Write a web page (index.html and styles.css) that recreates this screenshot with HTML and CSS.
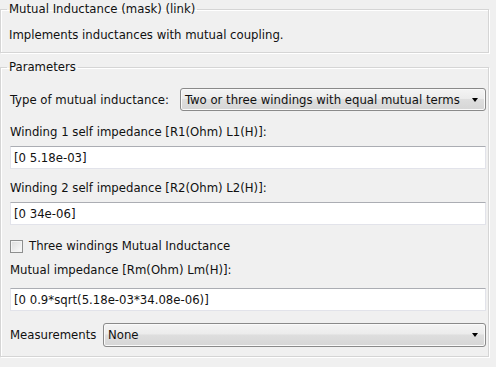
FILE: index.html
```html
<!DOCTYPE html>
<html>
<head>
<meta charset="utf-8">
<link rel="stylesheet" href="styles.css">
</head>
<body>
<fieldset class="group group-desc">
  <legend class="legend">Mutual Inductance (mask) (link)</legend>
  <div class="desc">Implements inductances with mutual coupling.</div>
</fieldset>
<fieldset class="group group-params">
  <legend class="legend">Parameters</legend>
  <div class="row row-type">
    <span class="label">Type of mutual inductance:</span>
    <div class="combo combo-type"><span class="combo-text">Two or three windings with equal mutual terms</span><span class="arrow"></span></div>
  </div>
  <div class="label field-label l1">Winding 1 self impedance [R1(Ohm) L1(H)]:</div>
  <div class="edit e1">[0 5.18e-03]</div>
  <div class="label field-label l2">Winding 2 self impedance [R2(Ohm) L2(H)]:</div>
  <div class="edit e2">[0 34e-06]</div>
  <div class="check-row">
    <span class="checkbox"></span>
    <span class="label">Three windings Mutual Inductance</span>
  </div>
  <div class="label field-label l3">Mutual impedance [Rm(Ohm) Lm(H)]:</div>
  <div class="edit e3">[0 0.9*sqrt(5.18e-03*34.08e-06)]</div>
  <div class="row row-meas">
    <span class="label">Measurements</span>
    <div class="combo combo-meas"><span class="combo-text">None</span><span class="arrow"></span></div>
  </div>
</fieldset>
</body>
</html>
```
FILE: styles.css
```css
html, body {
  margin: 0;
  padding: 0;
  background: #f0f0f0;
}
body {
  width: 496px;
  height: 367px;
  overflow: hidden;
  font-family: "DejaVu Sans Condensed", "DejaVu Sans", sans-serif;
  font-size: 13px;
  line-height: 14px;
  color: #111;
}
.group {
  box-sizing: border-box;
  width: 489px;
  margin: 0;
  padding: 0 1px 0 9px;
  border: 1px solid #d5d5d5;
  box-shadow: inset 1px 1px 0 #fff, 1px 1px 0 #fff;
  min-width: 0;
}
.legend {
  padding: 0 2px;
  margin-left: -3px;
  line-height: 14px;
}
.group-desc {
  margin-top: 2px;
  height: 51px;
}
.desc {
  margin-top: 12px;
  margin-left: -1px;
}
.group-params {
  margin-top: 7px;
  height: 297px;
  display: flex;
  flex-direction: column;
}
.row {
  display: flex;
  align-items: center;
}
.row-type {
  margin-top: 14px;
  height: 23px;
}
.row-type .label {
  width: 170px;
  flex: none;
}
.row-meas {
  margin-top: 12px;
  height: 24px;
}
.row-meas .label {
  width: 93px;
  flex: none;
}
.combo {
  flex: 1;
  box-sizing: border-box;
  height: 100%;
  margin-right: 1px;
  border: 1px solid #8a8a8a;
  border-radius: 3px;
  background: linear-gradient(#f4f4f4 0%, #ececec 45%, #dedede 50%, #d6d6d6 100%);
  box-shadow: inset 0 0 0 1px #fafafa;
  display: flex;
  align-items: center;
  padding-left: 4px;
}
.combo-text {
  flex: 1;
}
.arrow {
  width: 0;
  height: 0;
  margin-right: 7px;
  border-left: 3px solid transparent;
  border-right: 3px solid transparent;
  border-top: 4px solid #000;
}
.field-label.l1 { margin-top: 14px; }
.field-label.l2 { margin-top: 12px; }
.field-label.l3 { margin-top: 10px; }
.edit {
  box-sizing: border-box;
  height: 23px;
  margin-top: 7px;
  margin-right: 1px;
  background: #fff;
  border: 1px solid #e2e3ea;
  border-top-color: #abadb3;
  padding-left: 3px;
  display: flex;
  align-items: center;
}
.e3 { margin-top: 11px; }
.check-row {
  margin-top: 14px;
  display: flex;
  align-items: center;
  height: 14px;
}
.checkbox {
  box-sizing: border-box;
  width: 13px;
  height: 13px;
  border: 1px solid #8e8f8f;
  background: linear-gradient(135deg, #dcdcdc, #fbfbfb);
  box-shadow: inset 0 0 0 1px #f4f4f4;
  margin-right: 6px;
}
```
